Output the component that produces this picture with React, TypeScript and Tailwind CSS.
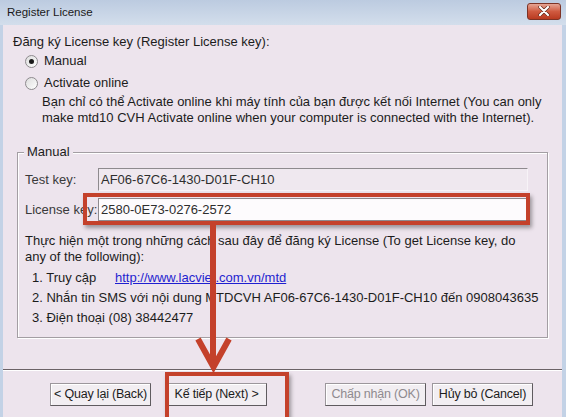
import React from 'react';

const Radio = ({ checked }: { checked?: boolean }) => (
  <span className="flex h-[13px] w-[13px] items-center justify-center rounded-full border border-[#8d8a8d] bg-gradient-to-br from-[#dcdcdc] to-white">
    {checked && <span className="h-[5px] w-[5px] rounded-full bg-[#1a1a1a]" />}
  </span>
);

const Button = ({ label, disabled, className = '' }: { label: string; disabled?: boolean; className?: string }) => (
  <div
    className={`flex h-[23px] w-[101px] items-center justify-center whitespace-nowrap border border-[#9c979c] border-b-[#5f5b5f] border-r-[#5f5b5f] bg-[#f2eef2] text-[12.5px] tracking-[-0.2px] shadow-[inset_1px_1px_0_#ffffff] ${
      disabled ? 'text-[#8f8a8f]' : 'text-[#1c1c1c]'
    } ${className}`}
  >
    {label}
  </div>
);

const App = () => {
  return (
    <div className="relative flex h-[417px] w-[566px] flex-col overflow-hidden bg-[#c3d2e6] font-['Liberation_Sans',Arial,sans-serif] text-[13px] text-[#1c1c1c]">
      {/* Title bar */}
      <div className="flex h-[25px] shrink-0 items-center justify-between bg-gradient-to-b from-[#bccbe0] to-[#d3deec] pl-[7px] pr-[5px]">
        <span className="text-[11.5px] text-[#1a1a1a]">Register License</span>
        <div className="mb-[3px] flex h-[17px] w-[34px] items-center justify-center rounded-[3px] border border-[#7d3325] bg-gradient-to-b from-[#e5a494] via-[#cf5a40] to-[#b93a20]">
          <svg width="12" height="10" viewBox="0 0 12 10">
            <path d="M2 1 L10 9 M10 1 L2 9" stroke="#5a2418" strokeWidth="3.4" strokeLinecap="round" />
            <path d="M2 1 L10 9 M10 1 L2 9" stroke="#ffffff" strokeWidth="2.2" strokeLinecap="round" />
          </svg>
        </div>
      </div>

      {/* Body */}
      <div className="ml-[3px] mr-[4px] flex flex-1 flex-col bg-[#ede4ed]">
        <div className="mt-[9px] h-[16px] pl-[10px] leading-[16px]">Đăng ký License key (Register License key):</div>
        <div className="mt-[3px] flex h-[16px] items-center gap-[6px] pl-[22px]">
          <Radio checked />
          <span>Manual</span>
        </div>
        <div className="mt-[6px] flex h-[16px] items-center gap-[6px] pl-[22px]">
          <Radio />
          <span>Activate online</span>
        </div>
        <div className="mt-[3px] pl-[39px] leading-[16px]">
          <div>Bạn chỉ có thể Activate online khi máy tính của bạn được kết nối Internet (You can only</div>
          <div>make mtd10 CVH Activate online when your computer is connected with the Internet).</div>
        </div>

        {/* Manual group */}
        <div className="relative ml-[14px] mt-[26px] h-[186px] w-[531px] border border-[#a39ea3] shadow-[inset_1px_1px_0_#ffffff,1px_1px_0_#ffffff]">
          <span className="absolute -top-[9px] left-[6px] bg-[#ede4ed] px-[3px] leading-[16px]">Manual</span>

          <div className="mt-[15px] flex h-[23px] items-center pl-[7px]">
            <span className="w-[73px] text-[#3a3a3a]">Test key:</span>
            <div className="flex h-[23px] w-[430px] items-center border border-[#8e8a8e] border-b-[#f7f3f7] border-r-[#f7f3f7] bg-[#efe8ef] pl-[2px] text-[#2e2e2e]">
              AF06-67C6-1430-D01F-CH10
            </div>
          </div>
          <div className="mt-[7px] flex h-[23px] items-center pl-[7px]">
            <span className="w-[73px] whitespace-nowrap text-[#3a3a3a]">License key:</span>
            <div className="flex h-[23px] w-[430px] items-center border border-[#8e8a8e] bg-[#fdfbfd] pl-[2px] text-[#2e2e2e]">
              2580-0E73-0276-2572
            </div>
          </div>

          <div className="mt-[12px] pl-[7px] leading-[16px]">
            <div>Thực hiện một trong những cách sau đây để đăng ký License (To get License key, do</div>
            <div>any of the following):</div>
          </div>
          <div className="mt-[3px] pl-[14px]">
            <div className="flex h-[20px] items-center">
              <span className="w-[83px]">1. Truy cập</span>
              <span className="text-[#1f1fd0] underline">http://www.lacviet.com.vn/mtd</span>
            </div>
            <div className="flex h-[20px] items-center whitespace-nowrap">2. Nhắn tin SMS với nội dung MTDCVH AF06-67C6-1430-D01F-CH10 đến 0908043635</div>
            <div className="flex h-[20px] items-center">3. Điện thoại (08) 38442477</div>
          </div>
        </div>

        {/* Separator */}
        <div className="mt-[31px] h-[2px] border-b border-t border-b-white border-t-[#6b6266]" />

        {/* Buttons */}
        <div className="mt-[12px] flex items-center pl-[47px]">
          <Button label="< Quay lại (Back)" />
          <Button label="Kế tiếp (Next) >" className="ml-[15px]" />
          <Button label="Chấp nhận (OK)" disabled className="ml-[58px]" />
          <Button label="Hủy bỏ (Cancel)" className="ml-[6px]" />
        </div>
      </div>

      {/* Annotations */}
      <div className="pointer-events-none absolute left-[83px] top-[193px] h-[32px] w-[447px] border-[4px] border-[#c4412b] shadow-[2px_3px_4px_rgba(0,0,0,0.35)]" />
      <div className="pointer-events-none absolute left-[165px] top-[372px] h-[50px] w-[124px] border-[4px] border-[#c4412b] shadow-[2px_3px_4px_rgba(0,0,0,0.35)]" />
      <svg className="pointer-events-none absolute left-0 top-0" width="566" height="417" viewBox="0 0 566 417">
        <path d="M213 225 L213 364" stroke="#c4412b" strokeWidth="6" />
        <path d="M198 339 L213.5 367 L229 339" stroke="#c4412b" strokeWidth="6" fill="none" />
      </svg>
    </div>
  );
};

export default App;
